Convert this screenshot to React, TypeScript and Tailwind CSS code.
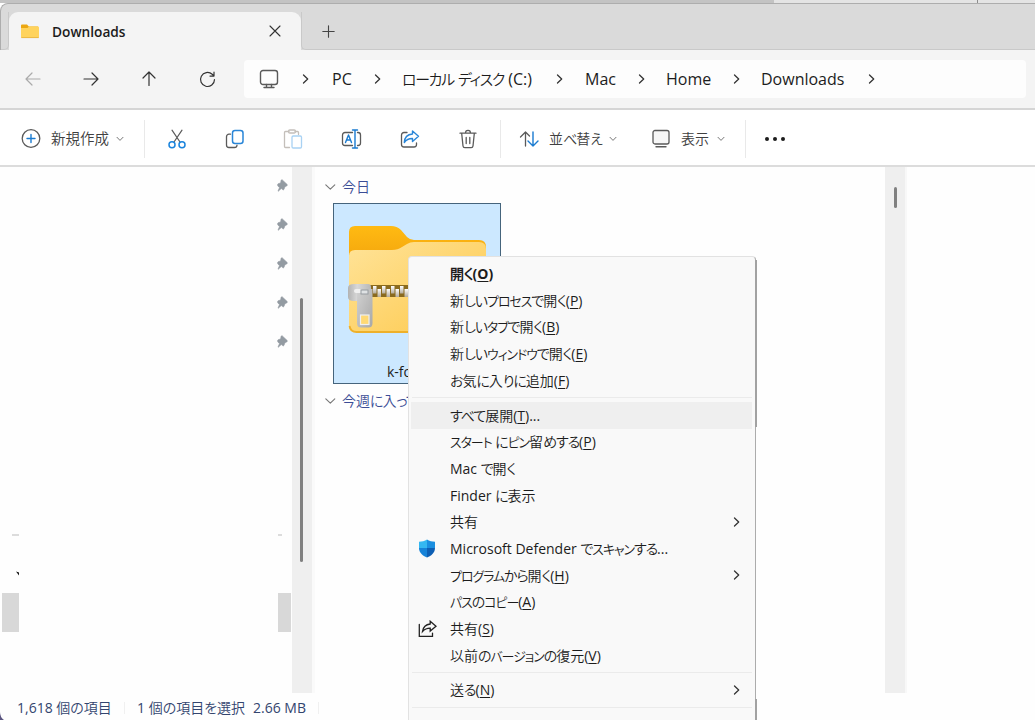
import type { ReactNode } from "react";

type MenuEntry = {
  label: string;
  accessKey?: string;
  tail?: string;
  bold?: boolean;
  active?: boolean;
  submenu?: boolean;
  icon?: ReactNode;
};

// UI fonts set kana narrower than kanji, so kana runs get their own size and tracking
function Text({ children }: { children: string }) {
  const runs = children.split(/([\u3041-\u309f]+|[\u30a0-\u30ff]+)/);
  return (
    <>
      {runs.map((run, i) => {
        if (/^[\u30a0-\u30ff]/.test(run)) {
          return <span key={i} className="text-[0.93em] tracking-[-0.085em]">{run}</span>;
        }
        if (/^[\u3041-\u309f]/.test(run)) {
          return <span key={i} className="tracking-[-0.075em]">{run}</span>;
        }
        return run;
      })}
    </>
  );
}

function Svg({ w, h, className = "", children }: { w: number; h: number; className?: string; children: ReactNode }) {
  return (
    <svg
      width={w}
      height={h}
      viewBox={`0 0 ${w} ${h}`}
      fill="none"
      stroke="#5a5a5a"
      strokeWidth="1.3"
      strokeLinecap="round"
      strokeLinejoin="round"
      className={`shrink-0 ${className}`}
    >
      {children}
    </svg>
  );
}

function ChevronRight({ className = "" }: { className?: string }) {
  return (
    <Svg w={8} h={12} className={className}>
      <path d="M1.5 2 5.7 6 1.5 10" stroke="#333" strokeWidth="1.3" />
    </Svg>
  );
}

function ChevronDown({ className = "" }: { className?: string }) {
  return (
    <Svg w={8} h={6} className={className}>
      <path d="M1 1.3 4 4.4 7 1.3" stroke="#777" strokeWidth="1" />
    </Svg>
  );
}

function GroupChevron() {
  return (
    <Svg w={12} h={8}>
      <path d="M1.8 1.8 6.3 6.2 10.8 1.8" stroke="#777" strokeWidth="1.1" />
    </Svg>
  );
}

function ShieldIcon() {
  return (
    <svg width="18" height="19" viewBox="0 0 18 19">
      <path d="M9 .5C6.8 2.2 3.8 2.7 1 2.7V9h8Z" fill="#35b8f1" />
      <path d="M9 .5C11.2 2.2 14.2 2.7 17 2.7V9H9Z" fill="#1b8fe0" />
      <path d="M1 9c0 4.5 3.5 7.8 8 9.5V9Z" fill="#1683d8" />
      <path d="M17 9c0 4.5-3.5 7.8-8 9.5V9Z" fill="#0d5fb4" />
    </svg>
  );
}

function MenuShareIcon() {
  return (
    <Svg w={19} h={18}>
      <path
        d="M1.3 4.5v11.8h13.2v-3.2M12.2 1.2 18 6.2l-5.8 4.8V8.2c-3.2 0-5.6.9-7.7 3.3.6-4.2 3.3-7 7.7-7.5Z"
        stroke="#222"
        strokeLinejoin="miter"
      />
    </Svg>
  );
}

function FolderIcon() {
  return (
    <svg width="18" height="15" viewBox="0 0 18 15">
      <path d="M0 1.5Q0 .5 1 .5h5l1.800 2H17v3H0Z" fill="#eca711" />
      <path d="M0 4h6.500L8 2.600h9q1 0 1 1V13q0 1-1 1H1q-1 0-1-1Z" fill="#ffd35c" />
      <path d="M.3 13.600h17.400" stroke="#e6b03c" strokeWidth=".8" />
    </svg>
  );
}

function ZipFolderIcon() {
  return (
    <svg width="140" height="110" viewBox="0 0 140 110" className="block">
      <defs>
        <linearGradient id="front" x1="0" y1="0" x2="1" y2="1">
          <stop offset="0" stopColor="#ffe398" />
          <stop offset="1" stopColor="#fdc84a" />
        </linearGradient>
        <linearGradient id="back" x1="0" y1="0" x2="0" y2="1">
          <stop offset="0" stopColor="#ffba12" />
          <stop offset="1" stopColor="#f5a80e" />
        </linearGradient>
        <linearGradient id="head" x1="0" y1="0" x2="1" y2="0">
          <stop offset="0" stopColor="#b2b2b2" />
          <stop offset=".4" stopColor="#d8d8d8" />
          <stop offset="1" stopColor="#b8b8b8" />
        </linearGradient>
        <linearGradient id="pull" x1="0" y1="0" x2="1" y2="1">
          <stop offset="0" stopColor="#d2d2d2" />
          <stop offset="1" stopColor="#a8a8a8" />
        </linearGradient>
        <linearGradient id="tooth" x1="0" y1="0" x2="0" y2="1">
          <stop offset="0" stopColor="#ffffff" />
          <stop offset="1" stopColor="#b3ab9b" />
        </linearGradient>
        <pattern id="teeth" width="9" height="12" x="26" y="60" patternUnits="userSpaceOnUse">
          <rect width="9" height="12" fill="#8a6a1e" />
          <rect x="0" y="1" width="3.500" height="7.500" fill="url(#tooth)" />
          <rect x="4.500" y="4" width="3.500" height="8" fill="url(#tooth)" />
        </pattern>
      </defs>
      <path d="M2 7q0-6 6-6h36q6 0 10 4l6 7q3 3 7 3h65q7 0 7 7v10H2Z" fill="url(#back)" />
      <path d="M2 31q0-6 6-6h37q6 0 10-3l5-3q3-2 7-2h65q7 0 7 7v77q0 6-6 6H8q-6 0-6-6Z" fill="url(#front)" />
      <path d="M2.500 101q1 6 7 6H132" stroke="#eeb02a" strokeWidth="1.800" fill="none" />
      <rect x="22" y="60" width="118" height="12" fill="url(#teeth)" />
      <path d="M7 59h14q3 0 3 3v11q0 3-3 3H7q-6 0-6-4v-9q0-4 6-4Z" fill="url(#head)" />
      <path d="M10 64h15.500v34q0 4.500-4 4.500h-7.500q-4 0-4-4.500Z" fill="url(#pull)" />
      <rect x="7" y="64" width="8" height="4" rx="2" fill="#f0f0f0" />
      <rect x="14" y="65" width="7" height="4" fill="#dfe2e4" stroke="#969ba0" strokeWidth="1" />
      <rect x="13.500" y="90" width="8.500" height="9.500" fill="#ffd974" stroke="#efefef" strokeWidth="1.200" />
    </svg>
  );
}

function PinIcon() {
  return (
    <svg width="11" height="13" viewBox="0 0 11 13" fill="#939ba2" stroke="#939ba2" strokeWidth=".6">
      <path d="M5.3.9 10.2 5.500Q10.600 6.200 10 6.700L8 7.700 6.900 10.500Q6.400 11.300 5.600 10.600L4.300 9.500 1.200 12.300 1 12 2.500 8.600 1 7.200Q.4 6.300.6 5.500.9 4.600 1.800 4.500L3.600 4 4.100 1.300Q4.500.4 5.300.9Z" />
    </svg>
  );
}

const crumbs = [
  { label: "PC", box: "w-[44px] pl-[2px]" },
  { label: "ローカル ディスク (C:)", box: "w-[154px]" },
  { label: "Mac", box: "w-[54px] pl-px" },
  { label: "Home", box: "w-[67px]" },
  { label: "Downloads", box: "w-[107px]" },
];

const openItems: MenuEntry[] = [
  { label: "開く", accessKey: "O", bold: true },
  { label: "新しいプロセスで開く", accessKey: "P" },
  { label: "新しいタブで開く", accessKey: "B" },
  { label: "新しいウィンドウで開く", accessKey: "E" },
  { label: "お気に入りに追加", accessKey: "F" },
];

const fileItems: MenuEntry[] = [
  { label: "すべて展開", accessKey: "T", tail: "...", active: true },
  { label: "スタート にピン留めする", accessKey: "P" },
  { label: "Mac で開く" },
  { label: "Finder に表示" },
  { label: "共有", submenu: true },
  { label: "Microsoft Defender でスキャンする...", icon: <ShieldIcon /> },
  { label: "プログラムから開く", accessKey: "H", submenu: true },
  { label: "パスのコピー", accessKey: "A" },
  { label: "共有", accessKey: "S", icon: <MenuShareIcon /> },
  { label: "以前のバージョンの復元", accessKey: "V" },
];

const sendItems: MenuEntry[] = [{ label: "送る", accessKey: "N", submenu: true }];

function MenuRow({ item }: { item: MenuEntry }) {
  return (
    <div className={`ml-[2px] mr-[3px] flex h-[26.7px] items-center ${item.active ? "bg-[#efefef]" : ""}`}>
      <div className="flex w-[39px] shrink-0 pl-[7px]">{item.icon}</div>
      <div className={`grow whitespace-nowrap pt-[0.5px] ${item.bold ? "font-bold" : ""}`}>
        <Text>{item.label}</Text>
        {item.accessKey && (
          <>
            (<span className="underline underline-offset-2">{item.accessKey}</span>){item.tail}
          </>
        )}
      </div>
      {item.submenu && <ChevronRight className="mr-[11px]" />}
    </div>
  );
}

function MenuDivider() {
  return (
    <div className="flex h-[8px] items-center">
      <div className="mx-[3px] h-px grow bg-[#ebebeb]" />
    </div>
  );
}

function ContextMenu() {
  return (
    <div className="absolute left-[408px] top-[256px] h-[480px] w-[348px] rounded-[4px] border border-[#e2e2e2] border-r-[#acacac] bg-[#f9f9f9] pt-[3.5px] text-[14px] text-[#1c1c1c]">
      {openItems.map((item) => <MenuRow key={item.label} item={item} />)}
      <MenuDivider />
      {fileItems.map((item) => <MenuRow key={item.label + item.accessKey} item={item} />)}
      <MenuDivider />
      {sendItems.map((item) => <MenuRow key={item.label} item={item} />)}
      <MenuDivider />
      {/* heavier edge shadow at the top and bottom of the right side */}
      <div className="absolute -right-[2px] top-[3px] h-[167px] w-[2px] bg-[#a2a2a2]" />
      <div className="absolute -right-[2px] top-[442px] h-[40px] w-[2px] bg-[#a2a2a2]" />
    </div>
  );
}

function TabStrip() {
  return (
    <div className="flex h-[47px] shrink-0 items-end rounded-tl-[8px] border-l border-t border-[#adadad] bg-[#dadada]">
      <div className="h-[38px] w-2 rounded-br-[5px] border-b border-r border-[#c9c9c9]" />
      <div className="flex h-[38px] w-[292px] items-center rounded-t-[9px] bg-[#f4f4f4] pl-[12px]">
        <FolderIcon />
        <span className="ml-[13px] w-[217px] pt-[2px] text-[13.7px] font-semibold">Downloads</span>
        <Svg w={12} h={12}>
          <path d="M1 1 11 11M11 1 1 11" stroke="#333" strokeWidth="1.1" />
        </Svg>
      </div>
      <div className="flex h-[38px] grow items-center rounded-bl-[5px] border-b border-l border-[#c9c9c9] pl-[20px] pt-[2px]">
        <Svg w={13} h={13}>
          <path d="M6.5.8v11.4M.8 6.5h11.4" stroke="#444" strokeWidth="1.1" />
        </Svg>
      </div>
    </div>
  );
}

function NavBar() {
  return (
    <div className="flex h-[60px] shrink-0 items-center border-b-2 border-[#d5d5d5] bg-[#f4f4f4] pl-[25px]">
      <Svg w={16} h={14}>
        <path d="M15 7H1M7 1 1 7l6 6" stroke="#aaa" strokeWidth="1.2" />
      </Svg>
      <Svg w={16} h={14} className="ml-[42px]">
        <path d="M1 7h14M9 1l6 6-6 6" stroke="#333" strokeWidth="1.2" />
      </Svg>
      <Svg w={14} h={16} className="ml-[43px]">
        <path d="M7 14.5V1M1 7l6-6 6 6" stroke="#333" strokeWidth="1.2" />
      </Svg>
      <Svg w={17} h={17} className="ml-[43px]">
        <path d="M15.5 8.5a7 7 0 1 1-2.300-5.200l1.800 1.600M15 1.200v3.900h-4" stroke="#333" strokeWidth="1.2" />
      </Svg>
      <div className="ml-[28px] flex h-[38px] w-[782px] items-center rounded-[4px] bg-[#fdfdfd] pl-[15px] text-[16px]">
        <Svg w={20} h={20}>
          <rect x="1.5" y="1.5" width="17" height="14" rx="2.5" strokeWidth="1.4" />
          <path d="M7.5 15.5v3M12.5 15.5v3M5 18.5h10" strokeWidth="1.4" />
        </Svg>
        <ChevronRight className="ml-[23px]" />
        {crumbs.map((c) => (
          <div key={c.label} className="flex items-center">
            <span className={`ml-[20px] whitespace-nowrap ${c.box}`}>
              <Text>{c.label}</Text>
            </span>
            <ChevronRight />
          </div>
        ))}
      </div>
    </div>
  );
}

function Toolbar() {
  return (
    <div className="flex h-[57px] shrink-0 items-center border-b-2 border-[#dcdcdc] bg-white pl-[21px] pt-[2px] text-[14.5px] text-[#404040]">
      <Svg w={20} h={20}>
        <circle cx="10" cy="9.5" r="8.8" />
        <path d="M10 5.5v8M6 9.5h8" stroke="#1a7bd0" strokeWidth="1.4" />
      </Svg>
      <span className="ml-[10px] w-[65px] whitespace-nowrap">新規作成</span>
      <ChevronDown />
      <div className="ml-[20px] h-[38px] w-px bg-[#e9e9e9]" />
      <Svg w={18} h={20} className="ml-[23px]">
        <path d="M4 1.200 12 13M14 1.200 6 13" strokeWidth="1.2" />
        <circle cx="4" cy="15.7" r="3" stroke="#1a84dd" strokeWidth="1.5" />
        <circle cx="14" cy="15.7" r="3" stroke="#1a84dd" strokeWidth="1.5" />
      </Svg>
      <Svg w={20} h={20} className="ml-[39px]">
        <path d="M5.5 5.200H4a2.500 2.500 0 0 0-2.500 2.500v8.300a2.500 2.500 0 0 0 2.500 2.500h5.500a2.500 2.500 0 0 0 2.500-2.300" />
        <rect x="7.5" y="1.5" width="10.5" height="13" rx="2.5" stroke="#2a86d8" strokeWidth="1.5" />
      </Svg>
      <Svg w={20} h={20} className="ml-[38px]">
        <path d="M6 2.500H2.500Q1.500 2.500 1.500 3.500v14q0 1 1 1H6.500M12 2.500h2.500q1 0 1 1v2" stroke="#c4bfba" />
        <rect x="5.5" y="1" width="7" height="3" rx="1.3" stroke="#c4bfba" />
        <rect x="9" y="7" width="9.5" height="12" rx="1.3" stroke="#a9d2f3" />
      </Svg>
      <Svg w={21} h={20} className="ml-[38px]">
        <path d="M11.500 3.500H4A2.500 2.500 0 0 0 1.500 6v8A2.500 2.500 0 0 0 4 16.500h7.500M16.500 3.500h.5A2.500 2.500 0 0 1 19.500 6v8a2.500 2.500 0 0 1-2.500 2.500h-.5" />
        <path d="M14 1v18M11.500 1h5M11.500 19h5M4.500 13.500 7.500 6l3 7.500M5.500 11h4" stroke="#1a7bd0" strokeWidth="1.4" />
      </Svg>
      <Svg w={20} h={20} className="ml-[38px]">
        <path d="M7 3.500H4A2.500 2.500 0 0 0 1.500 6v9.500A2.500 2.500 0 0 0 4 18h10a2.500 2.500 0 0 0 2.500-2.500V14" />
        <path d="M12.500 2 18.500 7.300 12.500 12.500V9.500C9 9.400 6.500 10.400 4.300 13.500 4.600 8.500 7.500 5.300 12.500 5Z" stroke="#2a86d8" strokeWidth="1.4" />
      </Svg>
      <Svg w={18} h={20} className="ml-[39px]">
        <path d="M1 4.200h16M6.500 4Q6.500 1.300 9 1.300T11.500 4M2.700 4.500 4 17q.2 1.700 1.800 1.700h6.400q1.600 0 1.800-1.700l1.300-12.500M7.200 8.500v6M10.800 8.500v6" />
      </Svg>
      <div className="ml-[23px] h-[38px] w-px bg-[#e9e9e9]" />
      <Svg w={20} h={18} className="ml-[18px]">
        <path d="M6.5 16V2M1.500 7l5-5 4 4" />
        <path d="M14 2v14M9 11l5 5 5-5" stroke="#1a7bd0" strokeWidth="1.4" />
      </Svg>
      <span className="ml-[10px] w-[60px] whitespace-nowrap text-[14px]"><Text>並べ替え</Text></span>
      <ChevronDown />
      <Svg w={18} h={19} className="ml-[35px]">
        <rect x="1" y="1.5" width="16" height="13.5" rx="2" fill="#f7f7f7" />
        <path d="M4 17.800h10" strokeWidth="1.4" />
      </Svg>
      <span className="ml-[11px] w-[36px] whitespace-nowrap text-[14px]">表示</span>
      <ChevronDown />
      <div className="ml-[20px] h-[38px] w-px bg-[#e9e9e9]" />
      <div className="ml-[19px] flex gap-[4px]">
        <div className="size-[4px] rounded-full bg-[#1c1c1c]" />
        <div className="size-[4px] rounded-full bg-[#1c1c1c]" />
        <div className="size-[4px] rounded-full bg-[#1c1c1c]" />
      </div>
    </div>
  );
}

function Sidebar() {
  return (
    <div className="flex w-[315px] shrink-0">
      <div className="flex grow flex-col pt-[12px]">
        <div className="flex flex-col items-end gap-[26px] pr-[4px]">
          {[0, 1, 2, 3, 4].map((i) => <PinIcon key={i} />)}
        </div>
        <div className="mt-[186px] flex justify-between pl-[12px] pr-[10px]">
          <div className="h-[1.5px] w-[7px] bg-[#dcdcdc]" />
          <div className="h-[1.5px] w-[4px] bg-[#dcdcdc]" />
        </div>
        <svg width="4" height="5" className="ml-[16px] mt-[35px]">
          <path d="M0 .5 3 1.500V4.500Z" fill="#111" />
        </svg>
        <div className="mt-[17px] flex justify-between pl-[2px] pr-px">
          <div className="h-[39px] w-[17px] bg-[#d8d8d8]" />
          <div className="h-[39px] w-[13px] bg-[#d8d8d8]" />
        </div>
      </div>
      <div className="w-[20px] bg-[#efefef] pt-[131px]">
        <div className="ml-[8px] h-[264px] w-[3px] rounded-full bg-[#808080]" />
      </div>
      <div className="w-[3px] bg-[#fafafa]" />
    </div>
  );
}

function FilePane() {
  return (
    <div className="flex grow">
      <div className="grow pl-[9px] text-[14px] text-[#3b4d96]">
        <div className="flex h-[36px] items-center gap-[6px] pt-[4px]">
          <GroupChevron />
          今日
        </div>
        <div className="ml-[9px] flex h-[181px] w-[168px] flex-col border border-[#45647c] bg-[#cce8ff] pl-[13px] pt-[21px] text-[#1c1c1c]">
          <ZipFolderIcon />
          <span className="ml-[40px] mt-[27px]">k-form</span>
        </div>
        <div className="flex h-[34px] items-center gap-[6px]">
          <GroupChevron />
          <span><Text>今週に入って</Text></span>
        </div>
      </div>
      <div className="w-[20px] shrink-0 bg-[#efefef] pt-[20px]">
        <div className="ml-[9px] h-[21px] w-[3px] rounded-full bg-[#808080]" />
      </div>
      <div className="w-[130px] shrink-0 border-l-2 border-[#f8f8f8]" />
    </div>
  );
}

function StatusBar() {
  return (
    <div className="flex h-[27px] shrink-0 items-center pt-[3px] text-[14px] text-[#33456f]">
      <svg width="4" height="8" className="self-end">
        <path d="M0 0Q0 5 4 8H0Z" fill="#5a5580" />
      </svg>
      <span className="ml-[13px] w-[107px] whitespace-nowrap">1,618 個の項目</span>
      <div className="h-3 w-px bg-[#f0f0f0]" />
      <span className="ml-[12px] w-[116px] whitespace-nowrap">1 個の項目を選択</span>
      <span className="w-[65px] whitespace-nowrap">2.66 MB</span>
      <div className="h-3 w-px bg-[#f0f0f0]" />
    </div>
  );
}

export default function App() {
  return (
    <div className="relative flex h-[720px] w-[1035px] flex-col overflow-hidden bg-[#fefefe] font-['Open_Sans','Noto_Sans_CJK_JP_DemiLight','Noto_Sans_CJK_JP',sans-serif] leading-5 text-[#1c1c1c] [font-feature-settings:'palt']">
      <div className="flex h-[3px] shrink-0 bg-[#c3c3c3]">
        <div className="ml-[774px] w-[203px] bg-[#e4e4e4]" />
        <div className="w-px bg-[#8c8c8c]" />
        <div className="grow bg-[#e4e4e4]" />
      </div>
      <TabStrip />
      <NavBar />
      <Toolbar />
      <div className="flex min-h-0 grow">
        <Sidebar />
        <FilePane />
      </div>
      <StatusBar />
      <ContextMenu />
    </div>
  );
}
